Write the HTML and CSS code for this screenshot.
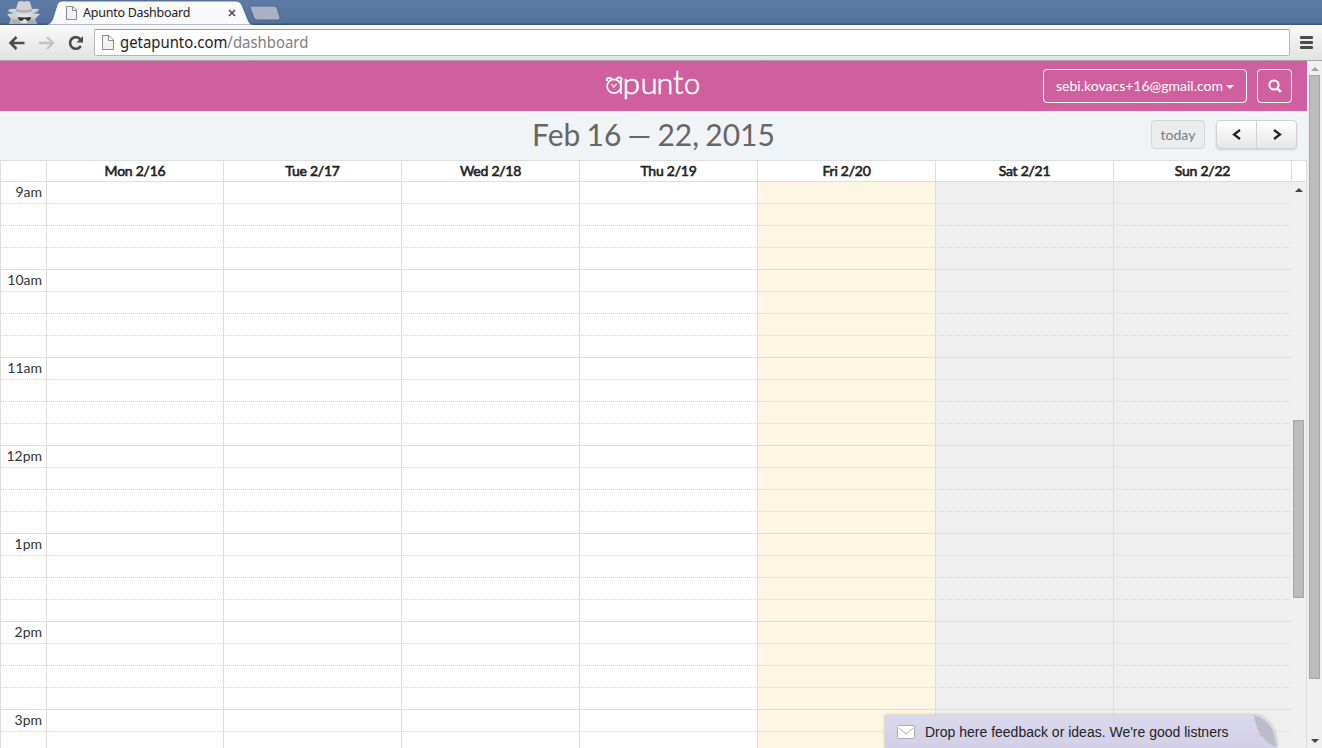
FILE: index.html
```html
<!DOCTYPE html>
<html lang="en">
<head>
<meta charset="utf-8">
<title>Apunto Dashboard</title>
<link rel="stylesheet" href="styles.css">
</head>
<body>
<header class="tabs">
  <svg class="tab-art" width="300" height="25" viewBox="0 0 300 25">
    <defs>
      <linearGradient id="coat" x1="0" y1="0" x2="0" y2="1"><stop offset="0" stop-color="#d9dadd"/><stop offset="1" stop-color="#b4b8bf"/></linearGradient>
    </defs>
    <path d="M9 24 11 19 7 14 16 13H31L40 14 35 19 37 24Z" fill="url(#coat)"/>
    <path d="M17 12H31L30 18 26 23H21L18 18Z" fill="#e2e3e5"/>
    <path d="M16 9 18 2Q22 0 24 2 27 0 30 2L32 9Q39 8 39 10 36 14 24 14T8 11Q9 8 16 9Z" fill="#d0d2d5"/>
    <path d="M16 9Q24 12 32 9L32 11Q24 14 16 11Z" fill="#a7abb1"/>
    <path d="M18 17 24 17.500 31 17Q31 21 27.500 21L25 19H24L22 21Q18 21 18 17Z" fill="#35383d"/>
    <path d="M12 20 17 19 22 24H11ZM36 20 31 19 26 24H35Z" fill="#a9adb5"/>
    <path d="M46 25Q51 24 53 18L57 5Q58 1 62 1H236Q240 1 242 5L248 20Q249 24 253 25Z" fill="#f9f9f9" stroke="#435d80" stroke-width=".8"/>
    <path d="M251 6H274Q276 6 277 8L280 17Q281 20 278 20H257Q255 20 254 18L250 8Q249 6 251 6Z" fill="#a9b2c5" stroke="#49658d"/>
    <path d="M66.500 6.500H73L76.500 10V19.500H66.500ZM72.500 6.500V10.500H76.500" fill="#f2f2f2" stroke="#8b8b8b"/>
    <path d="m229 10 6 6m0-6-6 6" stroke="#4c4c4c" stroke-width="1.700"/>
  </svg>
  <span class="tab-title">Apunto Dashboard</span>
</header>
<div class="toolbar">
  <svg class="nav" width="94" height="34" viewBox="0 0 94 34">
    <path d="M24.500 17H11M16.500 11 10.500 17 16.500 23" fill="none" stroke="#4b4b4b" stroke-width="2.600"/>
    <path d="M39 17H52.500M47 11 53 17 47 23" fill="none" stroke="#c3c3c3" stroke-width="2.400"/>
    <path d="M80.500 13.500A5.800 5.800 0 1 0 80.800 20" fill="none" stroke="#4b4b4b" stroke-width="2.600"/>
    <path d="M83 10V16.500H76.500Z" fill="#4b4b4b"/>
  </svg>
  <div class="omnibox">
    <svg width="25" height="25" viewBox="0 0 25 25"><path d="M7.500 5.500H14L18.500 10V19.500H7.500ZM13.500 5.500V10.500H18.500" fill="#f2f2f2" stroke="#8b8b8b"/></svg>
    <span class="url">getapunto.com<span class="path">/dashboard</span></span>
  </div>
  <div class="menu"><i></i><i></i><i></i></div>
</div>
<div class="view">
  <main class="page">
    <div class="brandbar">
      <svg class="logo" width="100" height="50" viewBox="0 0 100 50">
        <g fill="none" stroke="#fff" stroke-width="1.700">
          <circle cx="12" cy="25.300" r="6.900"/><path d="M19 19V33"/><path d="m9.500 23 2.200 3 3-3.200" stroke-width="1.200"/>
          <path d="M5 20Q4 17 7 17 9 16.500 9.500 18.500M15 18.500Q15 16 17.500 16.500 20 17 19.500 19" stroke-width="2"/>
        </g>
        <text class="wordmark" transform="translate(20.500 32.500) scale(1.100 1)">p</text>
        <text class="wordmark" transform="translate(38.500 32.500) scale(1.080 1)">u</text>
        <text class="wordmark" transform="translate(54.500 32.500) scale(1.060 1)">n</text>
        <text class="wordmark" transform="translate(71 32.500) scale(1.050 1.120)">t</text>
        <text class="wordmark" x="82" y="32.500">o</text>
      </svg>
      <div class="account"><span>sebi.kovacs+16@gmail.com</span><i class="caret"></i></div>
      <div class="search"><svg width="14" height="14" viewBox="0 0 14 14"><circle cx="6" cy="6" r="4.600" fill="none" stroke="#fff" stroke-width="2"/><path d="m9.300 9.300 3.500 3.500" stroke="#fff" stroke-width="2.400"/></svg></div>
    </div>
    <div class="heading">
      <h1>Feb 16 — 22, 2015</h1>
      <div class="today">today</div>
      <div class="pager">
        <div><svg width="12" height="12" viewBox="0 0 12 12"><path d="M9 1 3 5.500 9 10" /></svg></div>
        <div><svg width="12" height="12" viewBox="0 0 12 12"><path d="M3 1 9 5.500 3 10" /></svg></div>
      </div>
    </div>
    <div class="days">
      <b class="axis"></b><b class="first">Mon 2/16</b><b>Tue 2/17</b><b>Wed 2/18</b><b>Thu 2/19</b><b>Fri 2/20</b><b>Sat 2/21</b><b>Sun 2/22</b><b class="end"></b>
    </div>
    <div class="body">
      <div class="grid">
        <div class="hour"><span>9am</span></div>
        <div class="hour"><span>10am</span></div>
        <div class="hour"><span>11am</span></div>
        <div class="hour"><span>12pm</span></div>
        <div class="hour"><span>1pm</span></div>
        <div class="hour"><span>2pm</span></div>
        <div class="hour"><span>3pm</span></div>
      </div>
      <div class="gridscroll"><i class="up"></i><div class="thumb"></div></div>
    </div>
  </main>
  <aside class="pagescroll"><i class="up"></i><div class="thumb"></div><i class="down"></i></aside>
</div>
<div class="feedback">
  <svg width="18" height="14" viewBox="0 0 18 14"><rect x=".5" y=".5" width="17" height="13" rx="1" fill="#fff" stroke="#aaa9b5"/><path d="m2 3 7 6 7-6" fill="none" stroke="#aaa9b5"/></svg>
  <span>Drop here feedback or ideas. We're good listners</span>
  <svg class="curl" width="23" height="33" viewBox="0 0 23 33"><path d="M0 0Q20 5 22 32Q3 24 0 0Z" fill="#b9bccb"/><path d="M3 13.500H18M5 20.500H20" stroke="#dfa9c8" stroke-dasharray="3 1"/></svg>
</div>
</body>
</html>
```
FILE: styles.css
```css
* { box-sizing: border-box; }
body { margin: 0; width: 1322px; height: 748px; overflow: hidden; display: flex; flex-direction: column; font-family: Lato, sans-serif; color: #333; background: #fff; }
svg { display: block; flex: none; }
.tabs { height: 25px; flex: none; display: grid; background: linear-gradient(#5d7ba6, #557299 23px, #3c5578 24px); }
.tab-art, .tab-title { grid-area: 1 / 1; }
.tab-title { padding-left: 83px; font: 12.500px/25px "Noto Sans", sans-serif; color: #222; letter-spacing: -.25px; }
.toolbar { height: 36px; flex: none; display: flex; align-items: center; background: linear-gradient(#f9f9f9, #e2e2e2); border-bottom: 1px solid #a3a3a3; }
.omnibox { width: 1196px; height: 27px; display: flex; align-items: center; background: #fff; border: 1px solid #b5b5b5; border-top-color: #999; border-radius: 2px; }
.url { font: 16px/25px "Noto Sans", sans-serif; color: #222; transform: scaleX(.931); transform-origin: left; }
.path { color: #808080; }
.menu { width: 13px; margin-left: 10px; display: grid; gap: 2px; }
.menu i { height: 3px; border-radius: 1px; background: #4b4b4b; }
.view { flex: 1; min-height: 0; display: flex; }
.page { width: 1307px; display: flex; flex-direction: column; min-height: 0; }
.brandbar { height: 50px; flex: none; display: flex; align-items: center; background: #d05f9f; }
.logo { margin-left: 602px; }
.wordmark { font: 300 29px Lato, sans-serif; fill: #fff; stroke: #fff; stroke-width: .5px; }
.account { width: 204px; height: 34px; margin-left: 341px; padding-left: 12px; display: flex; align-items: center; gap: 3px; border: 1px solid #fff; border-radius: 4px; color: #fff; font-size: 14px; white-space: nowrap; }
.account span { padding-bottom: 1px; line-height: 17px; }
.caret { margin-top: 2px; border: 4px solid transparent; border-top-color: #fff; border-bottom: 0; }
.search { width: 35px; height: 34px; margin-left: 10px; display: grid; place-items: center; border: 1px solid #fff; border-radius: 4px; }
.heading { height: 49px; flex: none; display: flex; align-items: flex-start; background: #f0f4f7; color: #666; }
.heading h1 { margin: 0; width: 1151px; padding-left: 532px; font-size: 30px; word-spacing: -1.500px; line-height: 46px; font-weight: 400; white-space: nowrap; }
.today { margin-top: 9px; width: 54px; height: 29px; line-height: 28px; border: 1px solid #d3d5d7; border-radius: 4px; background: #ebecee; color: #777b80; font-size: 14px; text-align: center; }
.pager { margin: 9px 0 0 11px; width: 81px; height: 29px; display: flex; border: 1px solid #cfd1d3; border-radius: 4px; background: linear-gradient(#fff, #e6e6e6); box-shadow: 0 1px 2px rgba(0,0,0,.15); }
.pager div { flex: 1; display: grid; place-items: center; }
.pager div + div { border-left: 1px solid #cfd1d3; }
.pager path { fill: none; stroke: #222; stroke-width: 2.200; }
.days { height: 22px; flex: none; display: flex; border: 1px solid #ddd; }
.days b { width: 178px; border-left: 1px solid #ddd; text-align: center; font-size: 14px; line-height: 20px; font-weight: 400; letter-spacing: -.25px; color: #222; -webkit-text-stroke: .6px #222; }
.days .axis { width: 45px; border: 0; }
.days .first { width: 177px; }
.days .end { width: 15px; }
.body { flex: 1; min-height: 0; display: flex; border: 1px solid #ddd; border-width: 0 1px; }
.grid { width: 1290px; overflow: hidden; background:
  linear-gradient(#ddd, #ddd) 45px 0 / 1px 100% no-repeat,
  linear-gradient(#ddd, #ddd) 222px 0 / 1px 100% no-repeat,
  linear-gradient(#ddd, #ddd) 400px 0 / 1px 100% no-repeat,
  linear-gradient(#ddd, #ddd) 578px 0 / 1px 100% no-repeat,
  linear-gradient(#ddd, #ddd) 756px 0 / 1px 100% no-repeat,
  linear-gradient(#ddd, #ddd) 934px 0 / 1px 100% no-repeat,
  linear-gradient(#ddd, #ddd) 1112px 0 / 1px 100% no-repeat,
  linear-gradient(90deg, #fff 757px, #fdf6e2 757px 935px, #efefef 935px); }
.hour { height: 88px; border-bottom: 1px solid #ddd; background:
  repeating-linear-gradient(90deg, #d6d6d6 0 1px, transparent 1px 2px) 0 21px / 100% 1px no-repeat,
  repeating-linear-gradient(90deg, #d6d6d6 0 1px, transparent 1px 2px) 0 43px / 100% 1px no-repeat,
  repeating-linear-gradient(90deg, #d6d6d6 0 1px, transparent 1px 2px) 0 65px / 100% 1px no-repeat; }
.hour span { display: block; width: 41px; text-align: right; font-size: 14px; line-height: 19px; }
.gridscroll { width: 15px; background: #f0f0f0; padding: 6px 2px 0; }
.thumb { background: #bcbcbc; border: 1px solid #a6a6a6; }
.gridscroll .thumb { height: 178px; margin-top: 228px; }
.up, .down { display: block; width: 0; margin: 0 auto; border: 4px solid transparent; }
.up { border-top: 0; border-bottom-color: #444; }
.down { border-bottom: 0; border-top-color: #444; }
.pagescroll { width: 15px; background: #f0f0f0; padding: 6px 2px 0; }
.pagescroll .up { border-bottom-color: #a0a0a0; }
.pagescroll .thumb { height: 604px; margin: 4px 0 60px; }
.feedback { position: absolute; left: 885px; top: 715px; width: 392px; height: 33px; padding-left: 12px; display: flex; align-items: center; gap: 10px; border-top-right-radius: 22px 32px; background: linear-gradient(#dbd9ec, #d2cfe7); box-shadow: 0 0 3px rgba(0,0,0,.3); font: 14px "Liberation Sans", Arial, sans-serif; color: #222; white-space: nowrap; }
.curl { margin-left: auto; }
```
